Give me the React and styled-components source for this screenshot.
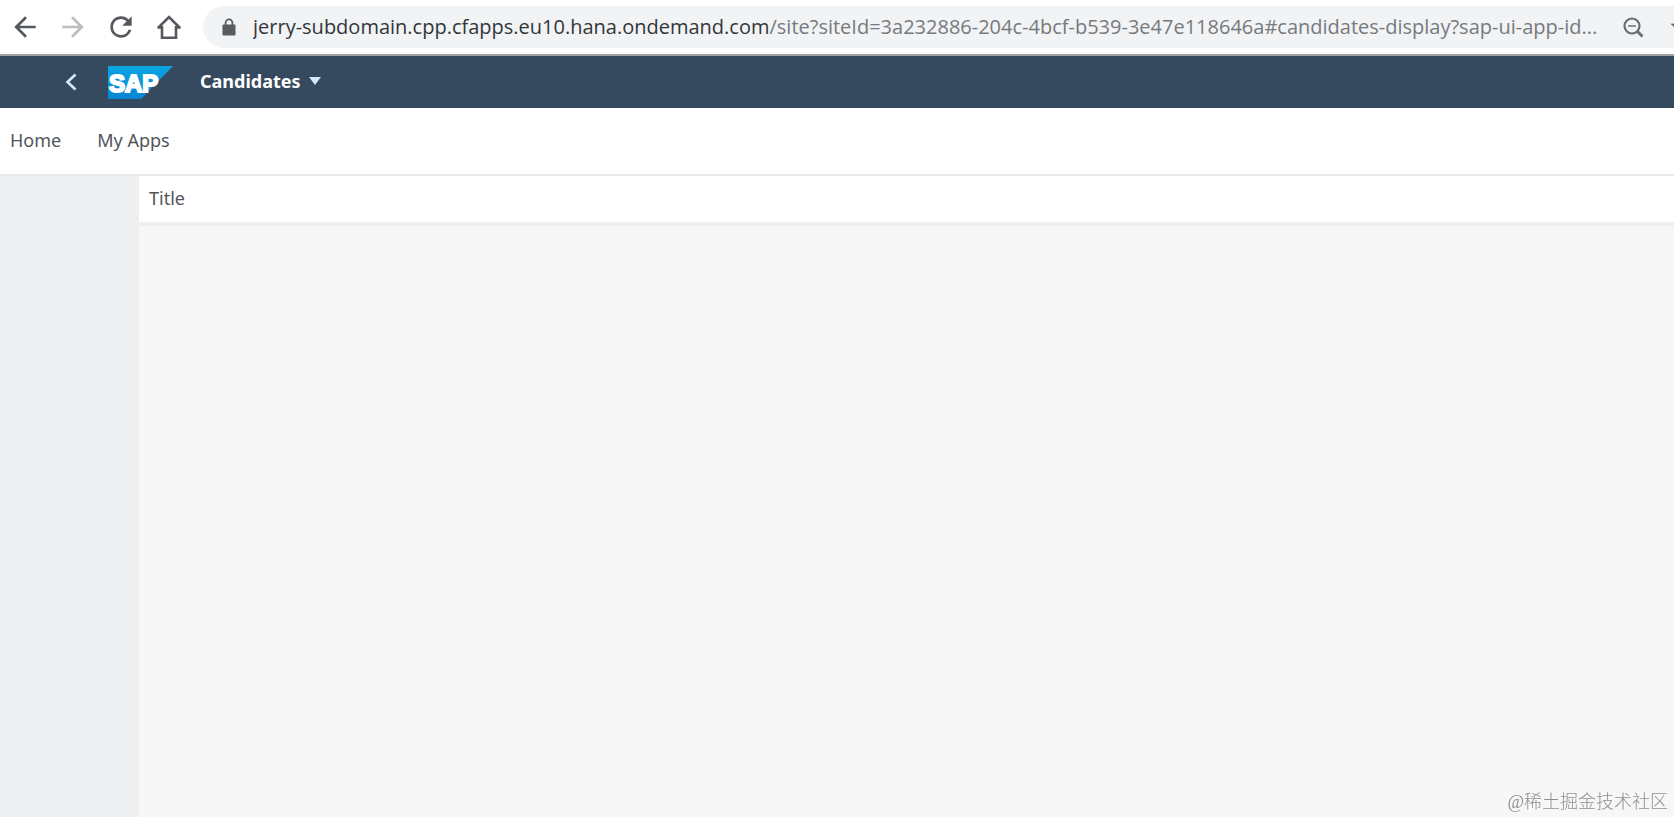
import { useState } from "react";
import styled, { createGlobalStyle } from "styled-components";
import { MdArrowBack, MdArrowForward, MdRefresh, MdStarBorder } from "react-icons/md";

const HOST = "jerry-subdomain.cpp.cfapps.eu10.hana.ondemand.com";
const PATH = "/site?siteId=3a232886-204c-4bcf-b539-3e47e118646a#candidates-display?sap-ui-app-id...";

export default function App() {
    return (
        <Page>
            <GlobalStyle />
            <BrowserBar />
            <ShellHeader />
            <MenuBar>
                <MenuLink href="#home">Home</MenuLink>
                <MenuLink href="#my-apps">My Apps</MenuLink>
            </MenuBar>
            <Workspace>
                <Letterbox />
                <AppPage>
                    <AppTitle>Title</AppTitle>
                </AppPage>
            </Workspace>
            <Watermark>@稀土掘金技术社区</Watermark>
        </Page>
    );
}

function BrowserBar() {
    const [editing, setEditing] = useState(false);
    const [url, setUrl] = useState(HOST + PATH);

    return (
        <Toolbar>
            <NavButtons>
                <ToolButton type="button" aria-label="Back"><MdArrowBack size={32} /></ToolButton>
                <ToolButton type="button" aria-label="Forward" disabled><MdArrowForward size={32} /></ToolButton>
                <ToolButton type="button" aria-label="Reload"><MdRefresh size={32} /></ToolButton>
                <ToolButton type="button" aria-label="Home page"><HomeIcon /></ToolButton>
            </NavButtons>
            <AddressBar>
                <LockIcon width="14" height="18" viewBox="0 0 14 18">
                    <path d="M3.600 8V4.800a3.400 3.400 0 0 1 6.800 0V8" fill="none" stroke="currentColor" strokeWidth="1.800" />
                    <rect x="0.500" y="6.500" width="13" height="11" rx="1" fill="currentColor" />
                </LockIcon>
                {editing ? (
                    <AddressInput
                        type="text"
                        aria-label="Address"
                        value={url}
                        onChange={(e) => setUrl(e.target.value)}
                        onBlur={() => setEditing(false)}
                        autoFocus
                    />
                ) : (
                    <AddressText type="button" onClick={() => setEditing(true)}>
                        <Host>{HOST}</Host>{PATH}
                    </AddressText>
                )}
                <AddressActions>
                    <ActionButton type="button" aria-label="Zoom"><ZoomOutIcon /></ActionButton>
                    <ActionButton type="button" aria-label="Bookmark"><MdStarBorder size={28} /></ActionButton>
                </AddressActions>
            </AddressBar>
        </Toolbar>
    );
}

function ShellHeader() {
    return (
        <Shell>
            <BackButton type="button" aria-label="Navigate back">
                <svg width="12" height="18" viewBox="0 0 12 18" fill="none" stroke="#d1e8ff" strokeWidth="2.6">
                    <path d="M10.500 1.500 2.500 9l8 7.500" />
                </svg>
            </BackButton>
            <LogoLink href="#home" aria-label="SAP">
                <SapLogo />
            </LogoLink>
            <AppMenu type="button">
                Candidates
                <svg width="12" height="8" viewBox="0 0 12 8" fill="#d1e8ff">
                    <path d="M0 0h12L6 8z" />
                </svg>
            </AppMenu>
        </Shell>
    );
}

function HomeIcon() {
    return (
        <svg width="26" height="26" viewBox="0 0 26 26" fill="none" stroke="currentColor" strokeWidth="2.6">
            <path d="M2 14 13 3l11 11M1.500 13.400H6V23.700h14V13.400h4.500" />
        </svg>
    );
}

function ZoomOutIcon() {
    return (
        <svg width="28" height="28" viewBox="0 0 28 28" fill="none" stroke="currentColor">
            <circle cx="12" cy="13" r="7.500" strokeWidth="2.200" />
            <path d="M8 13h8" strokeWidth="1.600" />
            <path d="m17.500 18.500 5 5" strokeWidth="3" />
        </svg>
    );
}

function SapLogo() {
    return (
        <svg width="65" height="33" viewBox="0 0 65 33">
            <defs>
                <linearGradient id="sap" x1="0" y1="0" x2="0" y2="1">
                    <stop offset="0" stopColor="#0aa5e4" />
                    <stop offset="1" stopColor="#0784d2" />
                </linearGradient>
            </defs>
            <path d="M0 0h65L33 33H0z" fill="url(#sap)" />
            <LogoText x="1" y="26">SAP</LogoText>
        </svg>
    );
}

const GlobalStyle = createGlobalStyle`
    * {
        box-sizing: border-box;
    }
    body {
        margin: 0;
        font-family: "Noto Sans", "Open Sans", sans-serif;
    }
    button {
        border: none;
        padding: 0;
        background: none;
        font-family: inherit;
        cursor: pointer;
    }
    svg {
        display: block;
    }
`;

const Page = styled.div`
    display: flex;
    flex-direction: column;
    min-height: 100vh;
    overflow: hidden;
    background-color: #ffffff;
`;

const Toolbar = styled.div`
    display: flex;
    align-items: center;
    padding: 6px 0;
    border-bottom: 2px solid #9fa3a6;
`;

const NavButtons = styled.div`
    display: flex;
    gap: 16px;
    padding: 0 18px 0 9px;
`;

const ToolButton = styled.button`
    display: flex;
    align-items: center;
    justify-content: center;
    width: 32px;
    height: 32px;
    color: #55585c;

    &:disabled {
        color: #bcbdbf;
        cursor: default;
    }
`;

const AddressBar = styled.div`
    display: flex;
    flex: 1;
    align-items: center;
    min-width: 0;
    height: 42px;
    padding-left: 19px;
    border-radius: 21px 0 0 21px;
    background-color: #f1f3f4;
    overflow: hidden;
`;

const LockIcon = styled.svg`
    flex-shrink: 0;
    margin-right: 17px;
    color: #5a5c60;
`;

const AddressText = styled.button`
    flex: 1;
    min-width: 0;
    overflow: hidden;
    color: #777a7e;
    font-family: "Open Sans", sans-serif;
    font-size: 20px;
    line-height: 30px;
    text-align: left;
    white-space: nowrap;
    cursor: text;
`;

const AddressInput = styled.input`
    flex: 1;
    min-width: 0;
    padding: 0;
    border: none;
    outline: none;
    background: none;
    color: #33363a;
    font-family: "Open Sans", sans-serif;
    font-size: 20px;
    line-height: 30px;
`;

const Host = styled.span`
    color: #33363a;
`;

const AddressActions = styled.div`
    display: flex;
    flex-shrink: 0;
    gap: 20px;
    width: 54px;
    overflow: hidden;
`;

const ActionButton = styled.button`
    flex-shrink: 0;
    color: #6a6d71;
`;

const Shell = styled.header`
    display: flex;
    align-items: center;
    height: 52px;
    padding-left: 65px;
    background-color: #354a5f;
`;

const BackButton = styled.button`
    margin-right: 31px;
`;

const LogoLink = styled.a`
    margin-right: 27px;
`;

const LogoText = styled.text`
    fill: #ffffff;
    stroke: #ffffff;
    stroke-width: 2px;
    font-family: "Liberation Sans", Arial, sans-serif;
    font-size: 24px;
    font-weight: 700;
`;

const AppMenu = styled.button`
    display: flex;
    align-items: center;
    gap: 8px;
    padding-bottom: 2px;
    color: #ffffff;
    font-size: 18px;
    font-weight: 700;
    line-height: 24px;
`;

const MenuBar = styled.nav`
    display: flex;
    align-items: center;
    gap: 36px;
    height: 68px;
    padding: 0 10px 2px;
    border-bottom: 2px solid #e7e8e9;
`;

const MenuLink = styled.a`
    color: #515559;
    font-size: 18px;
    line-height: 24px;
    text-decoration: none;
`;

const Workspace = styled.div`
    display: flex;
    flex: 1;
`;

const Letterbox = styled.div`
    width: 139px;
    background-color: #edeff1;
`;

const AppPage = styled.main`
    flex: 1;
    background-color: #f7f7f7;
`;

const AppTitle = styled.h1`
    margin: 0;
    padding: 10px 10px 12px;
    border-bottom: 4px solid #eeeff0;
    background-color: #ffffff;
    color: #515559;
    font-size: 18px;
    font-weight: 400;
    line-height: 24px;
`;

const Watermark = styled.div`
    position: fixed;
    right: 6px;
    bottom: 3px;
    color: #8f8f8f;
    font-family: "Liberation Serif", "Noto Sans CJK SC", serif;
    font-size: 18px;
    font-weight: 300;
    line-height: 24px;
`;
